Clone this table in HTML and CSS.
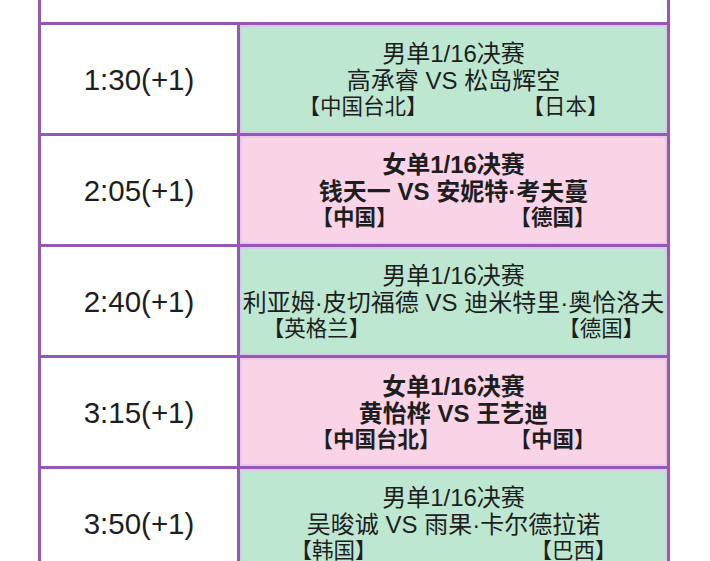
FILE: index.html
```html
<!DOCTYPE html>
<html lang="zh">
<head>
<meta charset="utf-8">
<link rel="stylesheet" href="styles.css">
</head>
<body>
<div class="table">
  <div class="top"></div>

  <div class="time">1:30(+1)</div>
  <div class="match men">
    <div>男单1/16决赛</div>
    <div>高承睿 VS 松岛辉空</div>
    <div class="countries g1"><span>【中国台北】</span><span>【日本】</span></div>
  </div>

  <div class="time">2:05(+1)</div>
  <div class="match women">
    <div>女单1/16决赛</div>
    <div>钱天一 VS 安妮特·考夫蔓</div>
    <div class="countries g2"><span>【中国】</span><span>【德国】</span></div>
  </div>

  <div class="time">2:40(+1)</div>
  <div class="match men">
    <div>男单1/16决赛</div>
    <div>利亚姆·皮切福德 VS 迪米特里·奥恰洛夫</div>
    <div class="countries g3"><span>【英格兰】</span><span>【德国】</span></div>
  </div>

  <div class="time">3:15(+1)</div>
  <div class="match women">
    <div>女单1/16决赛</div>
    <div>黄怡桦 VS 王艺迪</div>
    <div class="countries g4"><span>【中国台北】</span><span>【中国】</span></div>
  </div>

  <div class="time">3:50(+1)</div>
  <div class="match men">
    <div>男单1/16决赛</div>
    <div>吴晙诚 VS 雨果·卡尔德拉诺</div>
    <div class="countries g5"><span>【韩国】</span><span>【巴西】</span></div>
  </div>
</div>
</body>
</html>
```

FILE: styles.css
```css
html, body {
  margin: 0;
  padding: 0;
  background: #ffffff;
  overflow: hidden;
}

body {
  font-family: "Liberation Sans", "Noto Sans CJK SC", sans-serif;
  color: #1e1e1e;
}

.table {
  margin-left: 38px;
  width: 632px;
  display: grid;
  grid-template-columns: 196px 427px;
  grid-template-rows: 22px;
  grid-auto-rows: 108px;
  gap: 3px;
  padding: 0 3px 3px;
  box-sizing: border-box;
  background: #9558b6;
}

.top {
  grid-column: 1 / 3;
  background: #ffffff;
}

.time {
  background: #ffffff;
  display: flex;
  align-items: center;
  justify-content: center;
  font-size: 29.5px;
  padding-top: 2px;
  box-sizing: border-box;
}

.match {
  display: flex;
  flex-direction: column;
  align-items: center;
  justify-content: center;
  font-size: 24px;
  line-height: 27px;
  white-space: nowrap;
  padding-top: 2px;
  box-sizing: border-box;
}

.men {
  background: #bde7d1;
  box-shadow: inset 0 0 0 2px #d8cbe9;
}

.women {
  background: #f9d4e7;
  box-shadow: inset 0 0 0 2px #ecc6e6;
  font-weight: 700;
}

.countries {
  display: flex;
  font-size: 21.5px;
}

.g1 { gap: 95px; }
.g2 { gap: 112px; }
.g3 { gap: 188px; }
.g4 { gap: 69px; }
.g5 { gap: 154px; }
```
